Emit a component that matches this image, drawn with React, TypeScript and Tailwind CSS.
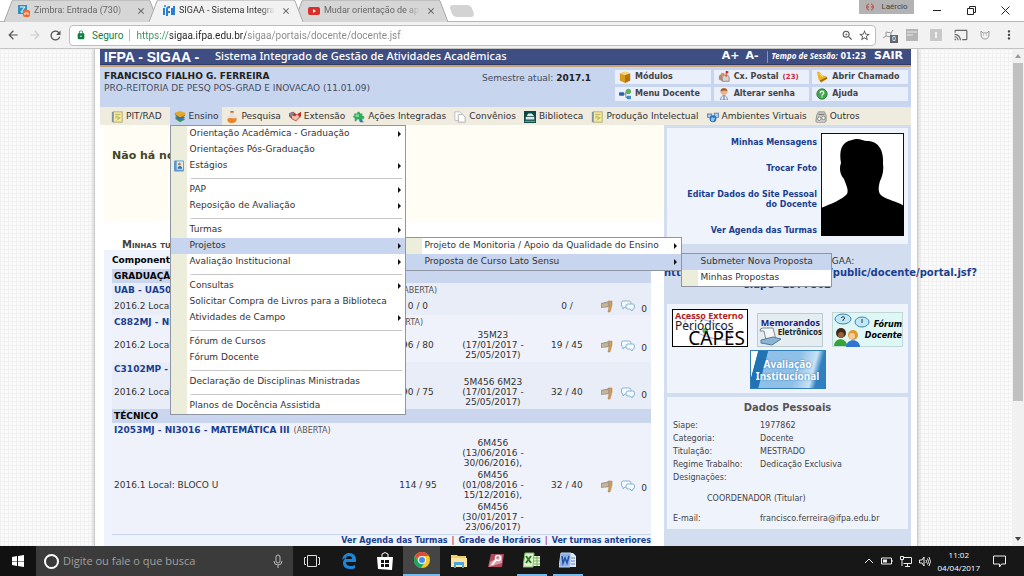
import React, { useState } from "react";
import {
  MdArrowBack,
  MdArrowForward,
  MdRefresh,
  MdLock,
  MdZoomIn,
  MdStarBorder,
  MdCast,
  MdMoreVert,
  MdClose,
} from "react-icons/md";

type MenuItem = { label: string; arrow?: boolean; icon?: boolean; children?: MenuItem[]; active?: boolean };

type Turma = {
  name: string;
  local: string;
  load: string;
  schedule: string[][];
  students: string;
  rowClass: string;
};

const menuGroups: MenuItem[][] = [
  [
    { label: "Orientação Acadêmica - Graduação", arrow: true },
    { label: "Orientações Pós-Graduação" },
    { label: "Estágios", arrow: true, icon: true },
  ],
  [{ label: "PAP", arrow: true }, { label: "Reposição de Avaliação", arrow: true }],
  [
    { label: "Turmas", arrow: true },
    {
      label: "Projetos",
      arrow: true,
      active: true,
      children: [
        { label: "Projeto de Monitoria / Apoio da Qualidade do Ensino", arrow: true },
        {
          label: "Proposta de Curso Lato Sensu",
          arrow: true,
          active: true,
          children: [{ label: "Submeter Nova Proposta", active: true }, { label: "Minhas Propostas" }],
        },
      ],
    },
    { label: "Avaliação Institucional", arrow: true },
  ],
  [
    { label: "Consultas", arrow: true },
    { label: "Solicitar Compra de Livros para a Biblioteca" },
    { label: "Atividades de Campo", arrow: true },
  ],
  [{ label: "Fórum de Cursos" }, { label: "Fórum Docente" }],
  [{ label: "Declaração de Disciplinas Ministradas" }],
  [{ label: "Planos de Docência Assistida" }],
];

const graduacao: Turma[] = [
  {
    name: "UAB - UA5012 - METODOLOGIA DE ENSINO MATEMÁTICA",
    local: "2016.2 Local:",
    load: "0 / 0",
    schedule: [],
    students: "0 /",
    rowClass: "bg-[#e8edf8]",
  },
  {
    name: "C882MJ - NS3016 - FUNDAMENTOS DA MATEMÁTICA I",
    local: "2016.2 Local:",
    load: "96 / 80",
    schedule: [["35M23", "(17/01/2017 -", "25/05/2017)"]],
    students: "19 / 45",
    rowClass: "bg-[#eff2fb]",
  },
  {
    name: "C3102MP - DIDÁTICA",
    local: "2016.2 Local:",
    load: "90 / 75",
    schedule: [["5M456 6M23", "(17/01/2017 -", "25/05/2017)"]],
    students: "32 / 40",
    rowClass: "bg-[#e8edf8]",
  },
];

const tecnico: Turma[] = [
  {
    name: "I2053MJ - NI3016 - MATEMÁTICA III",
    local: "2016.1 Local: BLOCO U",
    load: "114 / 95",
    schedule: [
      ["6M456", "(13/06/2016 -", "30/06/2016),"],
      ["6M456", "(01/08/2016 -", "15/12/2016),"],
      ["6M456", "(30/01/2017 -", "23/06/2017)"],
    ],
    students: "32 / 40",
    rowClass: "bg-[#eff2fb]",
  },
];

const dados = [
  ["Siape:", "1977862"],
  ["Categoria:", "Docente"],
  ["Titulação:", "MESTRADO"],
  ["Regime Trabalho:", "Dedicação Exclusiva"],
  ["Designações:", ""],
];

/* ---------- icons ---------- */

const NoteIcon = () => (
  <svg viewBox="0 0 14 14" className="w-3 h-3 shrink-0">
    <rect x="1" y="1" width="3" height="12" fill="#7f93a5" />
    <rect x="3" y="1" width="10" height="12" fill="#f6ecA0" stroke="#a9a36a" />
    <path d="M5 4h6M5 6h4M5 8h5" stroke="#b7a954" />
    <path d="M7 11l4-4" stroke="#7aa05a" />
  </svg>
);

const BooksIcon = () => (
  <svg viewBox="0 0 14 14" className="w-3 h-3 shrink-0">
    <path d="M1 9l6 4 6-3-6-4z" fill="#3f9a4a" />
    <path d="M1 7l6 4 6-3-6-4z" fill="#2f76b8" />
    <path d="M1 4l6 4 6-3V2L7 0 1 2z" fill="#e3a72b" />
    <path d="M1 4l6 4 6-3" stroke="#9a6412" fill="none" />
  </svg>
);

const FlaskIcon = () => (
  <svg viewBox="0 0 14 14" className="w-3 h-3 shrink-0">
    <path d="M5 0h4v5c3 1 4 3 4 5s-2 4-6 4-6-2-6-4 1-4 4-5z" fill="#e5e0d8" />
    <path d="M2 9c3-2 7 1 10-1 1 4-1 6-5 6s-6-2-5-5z" fill="#ee8222" />
    <path d="M5 0h4v2H5z" fill="#c9703a" />
  </svg>
);

const HandsIcon = () => (
  <svg viewBox="0 0 14 14" className="w-3 h-3 shrink-0">
    <path d="M0 3l5-2 4 3 5-3v5l-6 6-4-2-4-4z" fill="#c4332a" />
    <path d="M3 5l4 1 3-2 2 3-4 4-4-2z" fill="#e9c4ad" />
    <path d="M0 3l4-2 2 2-4 4z" fill="#7d8894" />
  </svg>
);

const PuzzleIcon = () => (
  <svg viewBox="0 0 14 14" className="w-3 h-3 shrink-0">
    <path d="M1 3h4c-1-3 4-3 3 0h3v3c3-1 3 4 0 3v3H7c1-3-3-3-3 0H2V8c-3 0-2-3 0-3z" fill="#2fae5a" />
    <path d="M3 4h4v3H3z" fill="#7fd6a0" />
    <path d="M8 9l5 4H8z" fill="#3572c6" />
  </svg>
);

const PagesIcon = () => (
  <svg viewBox="0 0 14 14" className="w-3 h-3 shrink-0">
    <path d="M1 1h6l2 2v8H1z" fill="#fff" stroke="#b9b9b9" />
    <path d="M5 4h5l3 3v6H5z" fill="#fff" stroke="#a7a7a7" />
  </svg>
);

const LibraryIcon = () => (
  <svg viewBox="0 0 14 14" className="w-3 h-3 shrink-0">
    <rect width="14" height="14" fill="#0e4a45" />
    <path d="M3 6l2-3h4l3 3H3zM2 7h10v3H2z" fill="#dfe9ea" />
    <path d="M1 12h12" stroke="#9fc0bd" />
  </svg>
);

const GlobeIcon = () => (
  <svg viewBox="0 0 14 14" className="w-3 h-3 shrink-0">
    <path d="M0 3h6v5H0zM8 2h6v6H8z" fill="#5b7da8" />
    <path d="M1 4h4v3H1zM9 3h4v4H9z" fill="#a9cdf0" />
    <circle cx="7" cy="9" r="4" fill="#2f6fc4" />
    <path d="M5 8c2-2 3 1 4 0s0 3-2 4-3-2-2-4z" fill="#8fc7ea" />
  </svg>
);

const CopierIcon = () => (
  <svg viewBox="0 0 14 14" className="w-3 h-3 shrink-0">
    <path d="M2 5l2-4h7l2 4v7l-3 2H3l-2-2z" fill="#c9c9c5" stroke="#8b8b86" />
    <circle cx="5" cy="9" r="2" fill="#fff" stroke="#777" />
    <circle cx="10" cy="8" r="2" fill="#fff" stroke="#777" />
    <path d="M4 4h7" stroke="#666" />
  </svg>
);

const CubeIcon = () => (
  <svg viewBox="0 0 14 14" className="w-3 h-3">
    <path d="M1 3l6-2 6 2v8l-6 3-6-3z" fill="#d99a1c" />
    <path d="M1 3l6 2 6-2-6-2z" fill="#f7d775" />
    <path d="M7 5v9l6-3V3z" fill="#b47410" />
  </svg>
);

const TreeIcon = () => (
  <svg viewBox="0 0 14 14" className="w-3 h-3">
    <path d="M5 7h3V4h2M8 7v4h2" stroke="#5a7da3" fill="none" />
    <rect x="0" y="5" width="6" height="4" rx="1" fill="#2e5fa8" />
    <circle cx="11" cy="4" r="3" fill="#62ad5e" />
    <rect x="9" y="9" width="5" height="4" rx="1" fill="#3f8ac4" />
  </svg>
);

const MailboxIcon = () => (
  <svg viewBox="0 0 14 14" className="w-3 h-3">
    <path d="M1 7c0-3 4-3 4 0v5l-4-2z" fill="#b78d78" />
    <path d="M3 5h7c3 0 3 2 3 3v4H5V7c0-1-1-2-2-2z" fill="#d9d2cf" stroke="#8d7f7a" />
    <path d="M9 0h3v3h-2v4H9z" fill="#cf2f2a" />
    <path d="M4 2l4 1-1 3-4-1z" fill="#e98b3a" />
  </svg>
);

const BellIcon = () => (
  <svg viewBox="0 0 14 14" className="w-3 h-3">
    <path d="M1 1l3 0 3 4 5 1 1 3-7 5-3-4z" fill="#f0b420" />
    <path d="M5 12l8-4" stroke="#9c6a0c" strokeWidth="2" />
    <path d="M4 3l4 4" stroke="#fde69a" />
  </svg>
);

const KeyUserIcon = () => (
  <svg viewBox="0 0 14 14" className="w-3 h-3">
    <circle cx="7" cy="4" r="4" fill="#e8b48a" />
    <path d="M3 4c0-5 8-5 8 0-2-2-6-1-8 0z" fill="#a3541a" />
    <path d="M3 14c0-7 8-7 8 0z" fill="#e9edf4" stroke="#7a8ba6" />
    <path d="M7 9v5" stroke="#2f5fa8" />
  </svg>
);

const HelpIcon = () => (
  <svg viewBox="0 0 14 14" className="w-3 h-3">
    <circle cx="7" cy="7" r="6" fill="#3fa64b" stroke="#227a32" />
    <path d="M5 6c0-3 4-3 4 0 0 1-2 1-2 3M7 10v1" stroke="#fff" strokeWidth="1.5" fill="none" />
  </svg>
);

const FlagIcon = () => (
  <svg viewBox="0 0 13 14" className="w-[13px] h-3.5">
    <path d="M8 2h4v4l-2 7H8l1-5-1-1z" fill="#d89a4c" stroke="#a97b45" strokeWidth=".5" />
    <path d="M1 4l9-2v6l-9 1z" fill="#a39a92" />
    <path d="M2 5l6-1v3L2 8z" fill="#c8b596" />
  </svg>
);

const ChatIcon = () => (
  <svg viewBox="0 0 14 12" className="w-3.5 h-3" fill="#f7fbff" stroke="#84b3d8">
    <path d="M2 1h6q2 0 2 2v2q0 2-2 2H4L2 9V7Q.5 7 .5 5V3Q.5 1 2 1z" />
    <path d="M7 4h5q1.500 0 1.500 2v1q0 2-1.500 2l-1 2-2-2H7q-2 0-2-2V6q0-2 2-2z" />
  </svg>
);

const ContactIcon = () => (
  <svg viewBox="0 0 11 12" className="w-2.5 h-3">
    <rect x="0" y="0" width="11" height="12" rx="1" fill="#5b9ad0" />
    <rect x="3" y="1" width="7" height="9" fill="#dcebf7" />
    <circle cx="6" cy="4" r="1.500" fill="#b5824d" />
    <path d="M4 9c0-4 5-4 5 0z" fill="#346ba5" />
  </svg>
);

/* ---------- browser chrome ---------- */

const Tab = ({ label, active, icon }: { label: string; active?: boolean; icon: React.ReactNode }) => (
  <div className={`relative flex h-[22px] w-[154px] -mr-[9px] items-center pl-3.5 pr-3 ${active ? "z-10" : ""}`}>
    <svg viewBox="0 0 154 22" preserveAspectRatio="none" className="absolute inset-0 w-full h-full">
      <path d="M0 22L8 1Q9 0 11 0H143Q145 0 146 1L154 22" fill={active ? "#f2f2f2" : "#d6d6d6"} stroke="#a8a8a8" />
    </svg>
    <span className="relative w-3 shrink-0">{icon}</span>
    <span
      className={`relative flex-1 ml-1 mr-1.5 overflow-hidden whitespace-nowrap [mask-image:linear-gradient(to_right,#000_85%,transparent)] ${
        active ? "text-[#333]" : "text-[#666]"
      }`}
    >
      {label}
    </span>
    <button aria-label="Fechar guia" className="relative text-[#555]">
      <MdClose className="w-2.5 h-2.5" />
    </button>
  </div>
);

const BrowserBar = () => {
  const [url, setUrl] = useState("https://sigaa.ifpa.edu.br/sigaa/portais/docente/docente.jsf");

  return (
    <header className="shrink-0 font-['Roboto',sans-serif]">
      <div className="flex h-[22px] bg-white pl-1 pr-0.5 text-[9px] border-b border-[#b5b5b5]">
        <Tab
          label="Zimbra: Entrada (730)"
          icon={
            <svg viewBox="0 0 12 12" className="w-3 h-3">
              <rect width="9" height="9" fill="#2e93c4" />
              <path d="M2 2h5L3 7h4" stroke="#fff" fill="none" />
              <rect x="5" y="5" width="7" height="7" rx="2" fill="#ee6b2d" />
              <path d="M7 10V8h3v2" stroke="#fff" fill="none" />
            </svg>
          }
        />
        <Tab
          label="SIGAA - Sistema Integrac"
          active
          icon={
            <svg viewBox="0 0 12 12" className="w-3 h-3">
              <path d="M1 3v7M4 11V4q0-2 3-2M4 7h3M9 3v7M11 1v9" stroke="#2b7fd0" strokeWidth="2" fill="none" />
              <circle cx="2" cy="1" r="1" fill="#2b7fd0" />
            </svg>
          }
        />
        <Tab
          label="Mudar orientação de ape"
          icon={
            <svg viewBox="0 0 12 12" className="w-3 h-3">
              <rect y="2" width="12" height="8" rx="2" fill="#d9302c" />
              <path d="M5 4l3 2-3 2z" fill="#fff" />
            </svg>
          }
        />
        <button aria-label="Nova guia" className="mt-[5px] ml-3 w-[22px] h-3 skew-x-[20deg] rounded-sm bg-[#d3d3d3]" />
        <div className="ml-auto flex items-start">
          <button className="flex items-center justify-center gap-1.5 h-3.5 w-[55px] bg-[#b3b3b3] text-[8px] text-[#444]">
            <svg viewBox="0 0 10 8" className="w-2.5 h-2" fill="none" stroke="#c53a36">
              <path d="M4 1C1 1 1 7 4 7M2 4h2M6 1c3 0 3 6 0 6M8 4H6" />
            </svg>
            Laércio
          </button>
          <button aria-label="Minimizar" className="flex h-5 w-[34px] ml-1.5 items-center justify-center">
            <svg viewBox="0 0 8 8" className="w-2 h-2" stroke="#222">
              <path d="M0 4.500h8" />
            </svg>
          </button>
          <button aria-label="Restaurar" className="flex h-5 w-[34px] items-center justify-center">
            <svg viewBox="0 0 9 9" className="w-[9px] h-[9px]" stroke="#222" fill="none">
              <path d="M.5 2.500h6v6h-6zM2.500 2.500v-2h6v6h-2" />
            </svg>
          </button>
          <button aria-label="Fechar" className="flex h-5 w-[34px] items-center justify-center">
            <svg viewBox="0 0 9 9" className="w-[9px] h-[9px]" stroke="#222">
              <path d="M.5.5l8 8M8.500.5l-8 8" />
            </svg>
          </button>
        </div>
      </div>

      <div className="flex items-center h-[27px] bg-[#f2f2f2] pl-1.5 pr-2 border-b border-[#c4c4c4] text-[#555]">
        <button aria-label="Voltar">
          <MdArrowBack className="w-3.5 h-3.5" />
        </button>
        <button aria-label="Avançar" className="ml-2 text-[#ccc]">
          <MdArrowForward className="w-3.5 h-3.5" />
        </button>
        <button aria-label="Recarregar" className="ml-1.5">
          <MdRefresh className="w-[15px] h-[15px]" />
        </button>
        <div className="flex flex-1 items-center h-[21px] ml-1.5 pl-1.5 pr-1 bg-white border border-[#bdbdbd] rounded-sm text-[10px]">
          <MdLock className="w-2.5 h-2.5 text-[#0b8043]" />
          <span className="ml-1.5 text-[#0b8043]">Seguro</span>
          <span className="mx-1.5 h-3 w-px bg-[#bbb]" />
          <input
            aria-label="Endereço"
            value={url}
            onChange={(e) => setUrl(e.target.value)}
            className="flex-1 min-w-0 outline-none bg-clip-text text-transparent bg-[linear-gradient(to_right,#3c8f60_0_34px,#222_34px_110px,#888_110px)]"
          />
          <MdZoomIn className="w-[13px] h-[13px]" />
          <MdStarBorder className="w-[13px] h-[13px] ml-1" />
        </div>
        <div className="flex items-center gap-3 ml-1.5 text-[#666]">
          <span className="relative">
            <svg viewBox="0 0 12 12" className="w-3 h-3" fill="none" stroke="#999">
              <path d="M1 9l3-2V3l5 1 2-3M4 7l5 1V4M9 8l2 2" />
            </svg>
            <span className="absolute left-2 top-1.5 w-2 h-2 bg-[#666] text-white text-[7px] leading-[8px] text-center">0</span>
          </span>
          <svg viewBox="0 0 12 12" className="w-3 h-3">
            <rect width="12" height="12" fill="#b5b5b5" />
            <path d="M1 3h10M1 6h6" stroke="#e6e6e6" />
          </svg>
          <svg viewBox="0 0 12 12" className="w-3 h-3">
            <rect width="12" height="12" fill="#c9c9c9" />
            <path d="M6 3v6" stroke="#f1f1f1" strokeWidth="2" />
          </svg>
          <MdCast className="w-3.5 h-3.5" />
          <svg viewBox="0 0 10 10" className="w-2.5 h-2.5" fill="none" stroke="#999">
            <path d="M1 1v3q0 5 4 5t4-5V1L7 3H3zM3 5h1M6 5h1" />
          </svg>
          <MdMoreVert className="w-3.5 h-3.5 text-[#444]" />
        </div>
      </div>
    </header>
  );
};

/* ---------- SIGAA ---------- */

const MenuEntry = ({ item }: { item: MenuItem }) => (
  <li className={`relative ${item.active ? "bg-[#c8d5ee]" : ""}`}>
    <a href="#" className="flex items-center h-4 pr-[3px] whitespace-nowrap">
      <span
        className={`flex h-4 w-4 shrink-0 items-center justify-center ${item.active ? "" : "bg-[#ecedda]"}`}
      >
        {item.icon && <ContactIcon />}
      </span>
      <span className="flex-1 pl-[3px]">{item.label}</span>
      {item.arrow && (
        <svg viewBox="0 0 4 6" className="w-1 h-1.5">
          <path d="M0 0l3 3-3 3z" fill="#111" />
        </svg>
      )}
    </a>
    {item.children && (
      <ul
        className={`absolute left-full -top-px z-20 bg-white border border-[#8f96a3] ${
          item.children[0].arrow ? "w-[277px]" : "w-[151px]"
        }`}
      >
        {item.children.map((child) => (
          <MenuEntry key={child.label} item={child} />
        ))}
      </ul>
    )}
  </li>
);

const EnsinoMenu = () => (
  <div className="absolute left-0 top-full z-20 w-[236px] bg-white border border-[#8f96a3] text-[#333]">
    {menuGroups.map((group, i) => (
      <ul key={i}>
        {i > 0 && (
          <li role="separator" className="flex h-2 items-center">
            <span className="h-2 w-4 bg-[#ecedda]" />
            <span className="ml-1 mr-[3px] h-px flex-1 bg-[#c6c6c6]" />
          </li>
        )}
        {group.map((item) => (
          <MenuEntry key={item.label} item={item} />
        ))}
      </ul>
    ))}
  </div>
);

const navItems = [
  { label: "PIT/RAD", icon: <NoteIcon /> },
  { label: "Ensino", icon: <BooksIcon /> },
  { label: "Pesquisa", icon: <FlaskIcon /> },
  { label: "Extensão", icon: <HandsIcon /> },
  { label: "Ações Integradas", icon: <PuzzleIcon /> },
  { label: "Convênios", icon: <PagesIcon /> },
  { label: "Biblioteca", icon: <LibraryIcon /> },
  { label: "Produção Intelectual", icon: <NoteIcon /> },
  { label: "Ambientes Virtuais", icon: <GlobeIcon /> },
  { label: "Outros", icon: <CopierIcon /> },
];

const shortcuts = [
  { label: "Módulos", icon: <CubeIcon /> },
  { label: "Cx. Postal", icon: <MailboxIcon />, count: "(23)" },
  { label: "Abrir Chamado", icon: <BellIcon /> },
  { label: "Menu Docente", icon: <TreeIcon /> },
  { label: "Alterar senha", icon: <KeyUserIcon /> },
  { label: "Ajuda", icon: <HelpIcon /> },
];

const TurmaRows = ({ turma }: { turma: Turma }) => (
  <>
    <tr className={turma.rowClass}>
      <td colSpan={5} className="h-3.5 pl-0.5 whitespace-nowrap">
        <a href="#" className="font-bold text-[#1a3f8f]">
          {turma.name}
        </a>
        <span className="pl-1 text-[8px] text-[#555]">(ABERTA)</span>
      </td>
    </tr>
    <tr className={turma.rowClass}>
      <td className="pl-0.5 whitespace-nowrap">{turma.local}</td>
      <td className="text-center">{turma.load}</td>
      <td className="text-center">
        <div className="flex flex-col gap-0.5 pt-px pb-0.5 leading-[10px]">
          {turma.schedule.map((lines, i) => (
            <div key={i}>
              {lines.map((line) => (
                <div key={line}>{line}</div>
              ))}
            </div>
          ))}
        </div>
      </td>
      <td className="text-center">{turma.students}</td>
      <td>
        <div className="flex items-center justify-end pr-1 h-[18px]">
          <a href="#" aria-label="Entrar na turma" className="mr-2">
            <FlagIcon />
          </a>
          <a href="#" aria-label="Fórum" className="mr-1.5">
            <ChatIcon />
          </a>
          <span className="pt-1.5">0</span>
        </div>
      </td>
    </tr>
  </>
);

const TurmasTable = () => (
  <section className="mr-[13px]">
    <h2 className="flex items-center h-[28px] pl-[18px] pt-4 text-[10px] font-bold text-[#444] [font-variant:small-caps]">
      Minhas turmas
    </h2>
    <div className="bg-[#eff3fb] pl-2">
      <table className="w-full table-fixed border-collapse text-[9px] leading-[11px] text-[#333]">
        <colgroup>
          <col />
          <col className="w-[70px]" />
          <col className="w-[80px]" />
          <col className="w-[68px]" />
          <col className="w-[50px]" />
        </colgroup>
        <thead>
          <tr>
            <th colSpan={5} className="h-[19px] pt-px text-left text-black font-bold">
              Componente
            </th>
          </tr>
        </thead>
        <tbody>
          <tr className="bg-[#c9d6ed]">
            <th colSpan={5} className="h-3.5 pl-0.5 text-left text-black">
              GRADUAÇÃO
            </th>
          </tr>
          {graduacao.map((t) => (
            <TurmaRows key={t.name} turma={t} />
          ))}
          <tr className="bg-[#c9d6ed]">
            <th colSpan={5} className="h-3.5 pl-0.5 text-left text-black">
              TÉCNICO
            </th>
          </tr>
          {tecnico.map((t) => (
            <TurmaRows key={t.name} turma={t} />
          ))}
        </tbody>
      </table>
      <div className="flex justify-end gap-1 border-t border-[#c9d6ed] text-[8px] leading-[11px] font-bold text-[#1a3f8f]">
        <a href="#">Ver Agenda das Turmas</a>
        <span className="text-[#a04060]">|</span>
        <a href="#">Grade de Horários</a>
        <span className="text-[#a04060]">|</span>
        <a href="#">Ver turmas anteriores</a>
      </div>
    </div>
  </section>
);

const Banners = () => (
  <div className="flex flex-wrap justify-center gap-x-[9px] gap-y-[3px] bg-[#eff3fc] px-1 pt-[5px] pb-1">
    <a
      href="#"
      className="relative w-[76px] h-[38px] bg-white border border-black pl-0.5 font-['Noto_Sans',sans-serif] leading-none"
    >
      <svg viewBox="0 0 76 38" className="absolute inset-0 w-full h-full">
        <ellipse cx="36" cy="20" rx="26" ry="8" fill="none" stroke="#a7a0d6" transform="rotate(20 36 20)" />
        <circle cx="33" cy="22" r="3" fill="#66b566" />
      </svg>
      <span className="relative block text-[9px] leading-[11px] whitespace-nowrap font-bold text-[#b01c22]">Acesso Externo</span>
      <span className="relative block text-[12px] leading-[9px] text-[#222]">Periódicos</span>
      <span className="relative block text-right pr-0.5 text-[19px] leading-[16px] text-black">CAPES</span>
    </a>
    <a
      href="#"
      className="relative self-end w-[66px] h-[34px] bg-[#e4eef2] border border-[#bccbd0] text-right font-['Noto_Sans',sans-serif] font-bold"
    >
      <svg viewBox="0 0 24 22" className="absolute left-px bottom-0 w-6 h-[22px]">
        <path d="M4 4q-3 0-3 3h4l2 9h10l-3-12z" fill="#f4f6f8" stroke="#7d8b98" />
        <path d="M2 16l12-3 8 2-9 6-11-2z" fill="#8cb5d4" stroke="#54799a" />
      </svg>
      <span className="relative block text-[9px] leading-[9px] pt-1 pr-0.5 text-[#1c1c7c]">Memorandos</span>
      <span className="relative block text-[8px] leading-[10px] text-[#222]">Eletrônicos</span>
    </a>
    <a
      href="#"
      className="relative self-end w-[71px] h-[35px] bg-[#dff8f6] border border-[#bfd8d6] text-right font-['DejaVu_Sans',sans-serif] italic font-bold text-black"
    >
      <svg viewBox="0 0 40 35" className="absolute left-0 top-0 w-10 h-[35px]">
        <ellipse cx="10" cy="6" rx="8" ry="5" fill="#bfe8fb" stroke="#3f83ad" />
        <ellipse cx="29" cy="9" rx="7" ry="5" fill="#bfe8fb" stroke="#3f83ad" />
        <path d="M8 5q2-3 4 0l-2 2v1M29 6v4" stroke="#333" fill="none" />
        <circle cx="8" cy="20" r="5" fill="#3d2a1c" />
        <circle cx="8" cy="22" r="3" fill="#9a6237" />
        <path d="M1 33c0-9 13-9 13 0z" fill="#37a337" />
        <circle cx="20" cy="22" r="5" fill="#e29a2d" />
        <circle cx="19" cy="23" r="3" fill="#f5cda0" />
        <path d="M13 34c0-9 14-9 14 0z" fill="#2f74d0" />
      </svg>
      <span className="relative block pt-1.5 text-[8px] leading-[11px]">Fórum</span>
      <span className="relative block text-[8px] leading-[11px]">Docente</span>
    </a>
    <a
      href="#"
      className="flex flex-col items-center justify-center w-[76px] h-[39px] border border-[#2e7fb8] bg-[linear-gradient(105deg,#fff_0_8%,#2372b4_9%_20%,#8fc0e8_21%_60%,#c9e2f5_80%,#2f80c0_88%)] font-['Noto_Sans',sans-serif] text-[10px] leading-[12px] font-bold text-white whitespace-nowrap [text-shadow:0_0_2px_#1f6cae]"
    >
      <span>Avaliação</span>
      <span>Institucional</span>
    </a>
  </div>
);

const Sidebar = () => (
  <aside className="w-[247px] shrink-0 bg-[#d3ddf0] px-[3px] pt-[3px] pb-[15px]">
    <div className="flex justify-end gap-1 bg-[#eff3fc] pt-[5px] pr-1 pb-2">
      <nav className="flex-1 flex flex-col items-end pt-[5px] text-right text-[8px] leading-[10px] font-bold text-[#1a3f8f]">
        <a href="#">Minhas Mensagens</a>
        <a href="#" className="mt-4">
          Trocar Foto
        </a>
        <a href="#" className="mt-4">
          Editar Dados do Site Pessoal
          <br />
          do Docente
        </a>
        <a href="#" className="mt-4">
          Ver Agenda das Turmas
        </a>
      </nav>
      <svg viewBox="0 0 83 103" className="w-[83px] h-[103px]">
        <rect x=".5" y=".5" width="82" height="102" fill="#fff" stroke="#111" />
        <path
          d="M0 75C10 71 22 66 26 61C28 57 25 52 23 46C19 42 18 35 20 30C18 18 20 9 31 7C37 4 42 8 46 8C58 8 63 18 62 31C63 38 61 44 59 48C57 55 57 60 61 63C66 67 76 68 83 73V103H0z"
          fill="#000"
        />
      </svg>
    </div>
    <div className="h-[60px] pt-[11px] text-center text-[9px] leading-[12px] text-[#333]">
      <p className="pr-1">Endereço da página no SIGAA:</p>
      <a href="#" className="-mx-[3px] block text-[10px] font-bold text-[#1a3f8f]">
        <span className="block whitespace-nowrap text-left">
          http://sigaa.ifpa.edu.br/sigaa/public/docente/portal.jsf?
        </span>
        siape=1977862
      </a>
    </div>
    <Banners />
    <div className="mt-1 bg-[#eff3fc] px-1.5 pt-1 pb-1 text-[8px] text-[#444]">
      <h3 className="text-center text-[10px] leading-[14px] font-bold text-[#555]">Dados Pessoais</h3>
      <table className="mt-1 w-full leading-[13px]">
        <tbody>
          {dados.map(([label, value]) => (
            <tr key={label}>
              <th className="w-[87px] text-left font-normal">{label}</th>
              <td>{value}</td>
            </tr>
          ))}
          <tr>
            <td colSpan={2} className="h-7 pl-[34px]">
              COORDENADOR (Titular)
            </td>
          </tr>
          <tr>
            <th className="text-left font-normal">E-mail:</th>
            <td>francisco.ferreira@ifpa.edu.br</td>
          </tr>
        </tbody>
      </table>
    </div>
  </aside>
);

const SigaaPage = () => (
  <div className="mx-auto w-full max-w-[824px] bg-white pl-[5px] pr-1.5 border-x border-[#ccc] shadow-[0_0_4px_#bbb] font-['DejaVu_Sans',sans-serif]">
    <div className="flex items-center h-[16px] bg-[#3f4e82] border-b border-[#2f3b68] px-1 text-white">
      <h1 className="w-[111px] font-['Liberation_Sans',sans-serif] text-[14px] leading-[16px] font-bold whitespace-nowrap">
        IFPA - SIGAA -
      </h1>
      <p className="flex-1 font-['Noto_Sans',sans-serif] text-[11px] font-medium whitespace-nowrap">
        Sistema Integrado de Gestão de Atividades Acadêmicas
      </p>
      <button className="text-[11px] font-bold">A+</button>
      <button className="ml-1.5 text-[11px] font-bold">A-</button>
      <span className="ml-2 h-3 w-px bg-[#8a93b5]" />
      <p className="ml-1 text-[8px] font-bold">
        <i className="font-['Noto_Sans',sans-serif]">Tempo de Sessão:</i> 01:23
      </p>
      <a href="#" className="ml-2 mr-1 text-[11px] font-bold">
        SAIR
      </a>
    </div>

    <div className="flex h-[42px] border-t-2 border-[#c3a075] bg-[#c8d5ee] pt-[3px]">
      <div className="flex-1 pl-1 text-[9px] leading-[12px]">
        <p className="font-bold text-[#222]">FRANCISCO FIALHO G. FERREIRA</p>
        <p className="text-[#444b60]">PRO-REITORIA DE PESQ POS-GRAD E INOVACAO (11.01.09)</p>
      </div>
      <p className="mr-6 pt-0.5 text-[9px] leading-[12px] text-[#444b60]">
        Semestre atual: <b className="text-[#222]">2017.1</b>
      </p>
      <div className="grid w-[293px] mr-[3px] grid-cols-3 gap-x-[3px] gap-y-[3px] content-start">
        {shortcuts.map((s) => (
          <a
            key={s.label}
            href="#"
            className="flex items-center gap-1 h-[14px] pl-1 bg-[#e9effb] text-[8px] font-bold text-[#444] whitespace-nowrap"
          >
            {s.icon}
            {s.label}
            {s.count && <span className="text-[7px] text-[#c8283c]">{s.count}</span>}
          </a>
        ))}
      </div>
    </div>

    <nav className="flex h-[18px] bg-[#efebdf] pl-[7px] text-[9px] text-[#333]">
      {navItems.map((n) => (
        <div key={n.label} className={`relative first:mr-1 ${n.label === "Ensino" ? "bg-[#c8d5ee]" : ""}`}>
          <button className="flex h-[18px] items-center gap-[3px] px-1 pt-0.5 whitespace-nowrap">
            {n.icon}
            {n.label}
          </button>
          {n.label === "Ensino" && <EnsinoMenu />}
        </div>
      ))}
    </nav>

    <main className="flex">
      <div className="flex-1 min-w-0 pl-1">
        <div className="h-[97px] bg-[#fffdf4] pl-2 pt-6">
          <p className="text-[11px] leading-[14px] font-bold text-[#44442a]">Não há notícias cadastradas.</p>
        </div>
        <TurmasTable />
      </div>
      <Sidebar />
    </main>
  </div>
);

/* ---------- taskbar ---------- */

const WindowsLogo = () => (
  <svg viewBox="0 0 12 12" className="w-3 h-3" fill="#fff">
    <path d="M0 2l5-1v5H0zM6 1l6-1v6H6zM0 6.500h5V11l-5-1zM6 6.500h6V12l-6-1z" />
  </svg>
);

const apps = [
  {
    name: "Visão de tarefas",
    state: "w-[37px]",
    icon: (
      <svg viewBox="0 0 16 14" className="w-4 h-3.5" fill="none" stroke="#ddd">
        <path d="M3.500 1.500h9v11h-9zM2 3.500H.5v7H2M14 3.500h1.500v7H14" />
      </svg>
    ),
  },
  {
    name: "Edge",
    state: "w-[37px]",
    icon: (
      <svg viewBox="0 0 16 16" className="w-4 h-4">
        <path
          d="M1 7C2 2 5 0 8 0c5 0 7 3 7 7v2H5c0 3 2 4 5 4 2 0 3-.5 4-1v3c-1 1-3 1-5 1-5 0-7-3-7-6 0-2 1-4 3-5-2 0-3 1-4 2zm4-1h6c0-2-1-3-3-3S5 4 5 6z"
          fill="#1b87dc"
        />
      </svg>
    ),
  },
  {
    name: "Loja",
    state: "w-9",
    icon: (
      <svg viewBox="0 0 16 18" className="w-4 h-[18px]">
        <path d="M0 5h16l-1 13-14-1z" fill="#fff" />
        <path d="M5 5V2q3-3 6 0v3" stroke="#fff" fill="none" />
        <path d="M4 8h3v3H4zM8 8h4v3H8zM4 12h3v3H4zM8 12h4v3H8z" fill="#111" />
      </svg>
    ),
  },
  {
    name: "Chrome",
    state: "w-[37px] bg-[#454545] border-b-2 border-[#76b9ed]",
    icon: (
      <svg viewBox="0 0 16 16" className="w-4 h-4">
        <circle cx="8" cy="8" r="8" fill="#f9c927" />
        <path d="M1 4a8 8 0 0 1 14 0H8a4 4 0 0 0-4 4z" fill="#dd4b3e" />
        <path d="M1 4a8 8 0 0 0 6 12l4-6a4 4 0 0 1-7-1z" fill="#1da362" />
        <circle cx="8" cy="8" r="4" fill="#fff" />
        <circle cx="8" cy="8" r="3" fill="#4a8af4" />
      </svg>
    ),
  },
  {
    name: "Explorador de Arquivos",
    state: "w-[37px]",
    icon: (
      <svg viewBox="0 0 16 14" className="w-4 h-3.5">
        <path d="M0 1h6l1 1h8v11H0z" fill="#f2ce6a" />
        <path d="M0 4h16v9H0z" fill="#fbe49c" />
        <path d="M3 8h10v6h-2v-3H5v3H3z" fill="#4aa7d8" />
      </svg>
    ),
  },
  {
    name: "Access",
    state: "w-[37px]",
    icon: (
      <svg viewBox="0 0 16 16" className="w-4 h-4">
        <path d="M3 1h13l-2 13H0z" fill="#b04a5e" />
        <path d="M2 9L14 2v8L1 14z" fill="#d99aa6" />
        <circle cx="10" cy="5" r="2.500" stroke="#fff" strokeWidth="1.500" fill="none" />
        <path d="M8 7l-4 5" stroke="#fff" strokeWidth="2" />
      </svg>
    ),
  },
  {
    name: "Excel",
    state: "w-[30px] mx-[3px] border-b-2 border-[#76b9ed]",
    icon: (
      <svg viewBox="0 0 18 16" className="w-[18px] h-4">
        <path d="M4 1h7v3h6v10H4z" fill="#e8f3e2" />
        <path d="M2 1h9l-1 14H0z" fill="#dff0d4" stroke="#7cbc5c" />
        <path d="M3 4l5 7M8 4l-5 7" stroke="#2f7a22" strokeWidth="2" />
        <path d="M11 6h6M11 9h6M11 12h6M14 4v10" stroke="#6fb455" />
      </svg>
    ),
  },
  {
    name: "Word",
    state: "w-[30px] mx-[3px] border-b-2 border-[#76b9ed]",
    icon: (
      <svg viewBox="0 0 18 16" className="w-[18px] h-4">
        <path d="M4 1h10l3 3v11H4z" fill="#e1eaf8" />
        <path d="M2 1h10l-1 14H0z" fill="#8fb0e4" stroke="#c4d6f2" />
        <path d="M3 4l1 7 2-5 2 5 2-7" stroke="#23509f" strokeWidth="1.500" fill="none" />
        <path d="M12 6h4M12 9h4M12 12h4" stroke="#5d84c8" />
      </svg>
    ),
  },
];

const Taskbar = () => {
  const [query, setQuery] = useState("");

  return (
    <footer className="flex shrink-0 h-[30px] bg-[#171717] text-white font-['Open_Sans',sans-serif]">
      <button aria-label="Iniciar" className="flex w-9 items-center justify-center bg-[#111]">
        <WindowsLogo />
      </button>
      <div className="flex w-[257px] items-center bg-[#3b3b3b] pl-2 pr-2.5">
        <span className="w-[15px] h-[15px] rounded-full border-2 border-white" />
        <input
          aria-label="Pesquisar"
          placeholder="Digite ou fale o que busca"
          value={query}
          onChange={(e) => setQuery(e.target.value)}
          className="flex-1 min-w-0 pl-1 text-[11px] bg-transparent outline-none placeholder:text-[#a0a0a0]"
        />
        <svg viewBox="0 0 10 14" className="w-2.5 h-3.5" fill="none" stroke="#bbb">
          <rect x="3" y="1" width="4" height="8" rx="2" />
          <path d="M1 7q0 4 4 4t4-4M5 11v3" />
        </svg>
      </div>
      {apps.map((app) => (
        <button key={app.name} aria-label={app.name} className={`flex items-center justify-center ${app.state}`}>
          {app.icon}
        </button>
      ))}
      <div className="ml-auto flex items-center gap-[7px] pr-[18px]">
        <svg viewBox="0 0 10 6" className="w-2.5 h-1.5" fill="none" stroke="#eee">
          <path d="M1 5l4-4 4 4" />
        </svg>
        <svg viewBox="0 0 12 8" className="w-3 h-2">
          <path d="M.5 1h10v6H.5zM11 3v2" fill="none" stroke="#eee" />
          <path d="M2 2.500h4v3H2z" fill="#eee" />
        </svg>
        <svg viewBox="0 0 12 11" className="w-3 h-[11px]" fill="none" stroke="#eee">
          <path d="M3.500 1.500h8v6h-8M7.500 8v2M5 10.500h5M.5.5h3v3h-3zM2 4v6" />
        </svg>
        <svg viewBox="0 0 12 11" className="w-3 h-[11px]" fill="none" stroke="#eee">
          <path d="M.5 4H3l2-3v9L3 7H.5zM7 4q1 1.500 0 3M8.500 2.500q2 3 0 6M10 1q3 4.500 0 9" />
        </svg>
        <div className="text-center font-['Open_Sans',sans-serif] text-[8px] leading-[13px]">
          <div>11:02</div>
          <div>04/04/2017</div>
        </div>
        <button aria-label="Notificações" className="ml-1.5">
          <svg viewBox="0 0 13 13" className="w-[13px] h-[13px]" fill="none" stroke="#eee">
            <path d="M.5 1h12v8h-4l-2 3v-3h-6z" />
          </svg>
        </button>
      </div>
    </footer>
  );
};

export default function App() {
  return (
    <div className="flex flex-col h-screen overflow-hidden bg-white">
      <BrowserBar />
      <div className="flex flex-1 min-h-0">
        <div className="flex-1 min-w-0 overflow-hidden bg-[#fbfbfb] bg-[linear-gradient(#f1f1f1_1px,transparent_1px),linear-gradient(90deg,#f1f1f1_1px,transparent_1px)] bg-[size:4px_4px]">
          <SigaaPage />
        </div>
        <div className="flex flex-col w-3 shrink-0 items-center bg-[#f1f1f1]">
          <svg viewBox="0 0 6 4" className="w-1.5 h-1 my-[5px]">
            <path d="M0 4l3-4 3 4z" fill="#999" />
          </svg>
          <div className="flex-1 w-full px-px">
            <div className="h-[72%] bg-[#c1c1c1]" />
          </div>
          <svg viewBox="0 0 6 4" className="w-1.5 h-1 my-[5px]">
            <path d="M0 0l3 4 3-4z" fill="#444" />
          </svg>
        </div>
      </div>
      <Taskbar />
    </div>
  );
}
